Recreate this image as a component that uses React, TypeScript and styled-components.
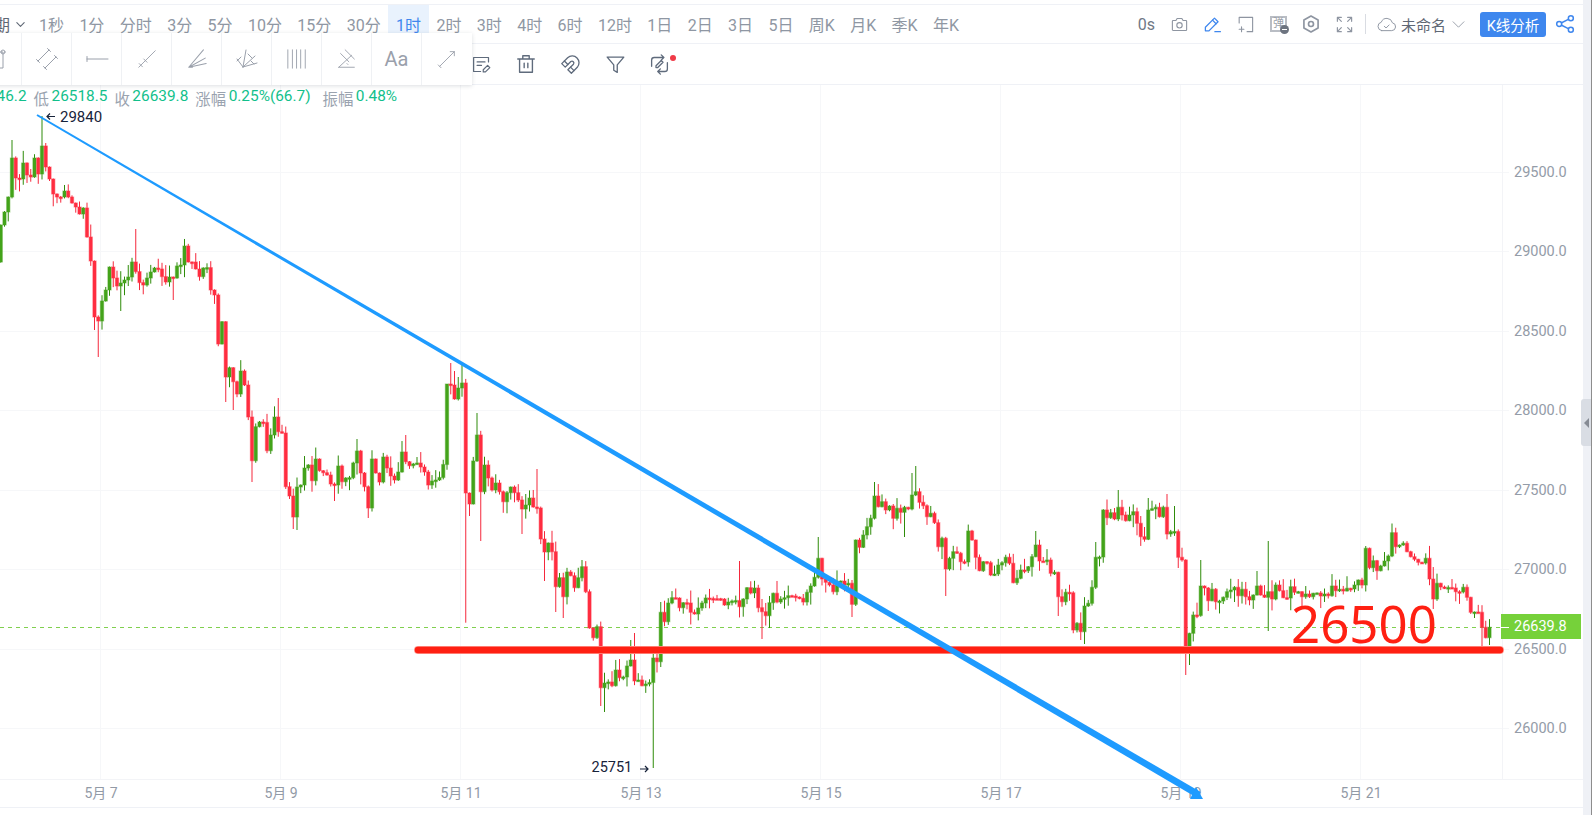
import React from 'react';
import styled, { createGlobalStyle } from 'styled-components';

const FONT = `Roboto, "Noto Sans CJK SC", sans-serif`;

const Global = createGlobalStyle`
  html, body { margin: 0; padding: 0; background: #fff; overflow: hidden; }
  #root { height: 815px; }
  * { box-sizing: border-box; }
`;

const Page = styled.div`
  display: flex; height: 815px; width: 1592px; font-family: ${FONT};
`;
const Main = styled.main`
  position: relative; flex: 1; min-width: 0; display: flex; flex-direction: column; overflow: hidden;
`;
const TopStrip = styled.div`
  height: 5px; flex: none; border-bottom: 1px solid #eff1f6;
`;
const PeriodBar = styled.div`
  height: 39px; flex: none; display: flex; align-items: stretch; padding-right: 8px;
  border-bottom: 1px solid #eff1f6; font-size: 16px; color: #8f97a3;
`;
const PeriodSelect = styled.div`
  display: flex; align-items: center; gap: 5px; margin-left: -22px; margin-right: 5.3px; color: #5f6875;
`;
const Period = styled.div<{ $active?: boolean }>`
  display: flex; align-items: center; padding: 0 7.7px; white-space: nowrap;
  color: ${p => (p.$active ? '#3f87ee' : '#8f97a3')};
  background: ${p => (p.$active ? '#e9f2fd' : 'transparent')};
`;
const Spacer = styled.div`flex: 1;`;
const Seconds = styled.div`
  display: flex; align-items: center; color: #6f7886; margin-right: 8px;
`;
const Slot = styled.div`
  width: 33px; display: flex; align-items: center; justify-content: center;
`;
const Divider = styled.div`
  width: 1px; height: 20px; align-self: center; background: #d9dce2; margin: 0 10px 0 4px;
`;
const DocName = styled.div`
  display: flex; align-items: center; color: #5f6875; margin-left: 4px; white-space: nowrap; font-size: 15px;
`;
const Analyse = styled.div`
  align-self: center; width: 66px; height: 25px; margin: 0 9px 0 15px; border-radius: 3px;
  background: #3e87ee; color: #fff; display: flex; align-items: center; justify-content: center;
  white-space: nowrap; font-size: 14.5px;
`;
const ToolBar = styled.div`
  height: 41px; flex: none; display: flex; align-items: center; padding-left: 459.5px;
  border-bottom: 1px solid #eff1f6;
`;
const ToolSlot = styled.div`
  position: relative; width: 44.5px; height: 40px; display: flex; align-items: center; justify-content: center;
`;
const RedDot = styled.span`
  position: absolute; left: 32px; top: 11px; width: 6px; height: 6px; border-radius: 50%; background: #f03a47;
`;
const DrawPanel = styled.div`
  position: absolute; left: -28px; top: 33px; height: 52px; display: flex; background: #fff;
  box-shadow: 0 1px 4px rgba(60, 70, 90, 0.18); z-index: 3;
`;
const DrawItem = styled.div`
  width: 50px; display: flex; align-items: center; justify-content: center;
  border-right: 1px solid #eff1f4; color: #9aa0ab; font-size: 20px;
  &:last-child { border-right: 0; }
`;
const InfoRow = styled.div`
  position: absolute; left: -47.3px; top: 88px; height: 20px; display: flex; align-items: center; gap: 7px;
  font-size: 15.4px; white-space: nowrap; z-index: 2;
`;
const InfoItem = styled.span<{ $far?: boolean }>`
  display: inline-flex; gap: 2.5px; margin-left: ${p => (p.$far ? 5 : 0)}px;
`;
const InfoLabel = styled.span`color: #9aa3af;`;
const InfoValue = styled.span`color: #12bf8b;`;
const ChartWrap = styled.div`
  height: 723px; flex: none; border-bottom: 1px solid #eff1f6;
`;
const ChartSvg = styled.svg`
  display: block; width: 1583px; height: 723px;
`;
const PriceTag = styled.div`
  position: absolute; left: 1501px; top: 614px; width: 80px; height: 25px; background: #76d13a; color: #fff;
  font-size: 14.5px; display: flex; align-items: center; padding-left: 13px; z-index: 2;
  &::before { content: ''; position: absolute; left: 0; top: 12.5px; width: 8px; height: 1px; background: #fff; }
`;
const Gutter = styled.aside`
  position: relative; width: 9px; flex: none; background: #eff1f6; border-right: 1px solid #8d8d8d; z-index: 4;
`;
const Handle = styled.div`
  position: absolute; left: -2px; top: 399px; width: 10px; height: 47px; background: #d9dde4;
  border-radius: 3px 0 0 3px; display: flex; align-items: center; justify-content: center;
  &::after {
    content: ''; border-style: solid; border-width: 5px 5px 5px 0;
    border-color: transparent #868b94 transparent transparent;
  }
`;
const Ico = styled.svg.attrs({ viewBox: '0 0 24 24', fill: 'none' })<{ $size: number; $tone: string; $w?: number; $ml?: number }>`
  display: block; flex: none; align-self: center; margin-left: ${p => p.$ml ?? 0}px;
  width: ${p => p.$size}px; height: ${p => p.$size}px;
  stroke: ${p => p.$tone}; stroke-width: ${p => p.$w ?? 1.5}; stroke-linecap: round; stroke-linejoin: round;
`;
const BulletBox = styled.div`
  position: relative; width: 17px; height: 16px; border: 2px solid #b9bdc4; color: #9a9fa8; font-size: 11px;
  line-height: 12px; text-align: center;
`;
const BulletMinus = styled.span`
  position: absolute; right: -4px; bottom: -4px; width: 9px; height: 9px; border-radius: 50%; background: #6d7480;
  &::after { content: ''; position: absolute; left: 2px; top: 4px; width: 5px; height: 1px; background: #fff; }
`;
const AxisText = styled.text`
  font-family: ${FONT}; font-size: 14.5px; fill: #949ca8;
`;
const DateText = styled.text`
  font-family: ${FONT}; font-size: 14px; fill: #929aa6; text-anchor: middle;
`;
const MarkText = styled.text<{ $size: number }>`
  font-family: ${FONT}; font-size: ${p => p.$size}px; fill: #17233a;
`;
const BigText = styled.text`
  font-family: "Noto Sans", sans-serif; font-size: 51px; fill: #ff2012;
`;

const GRAY = '#8e95a1';
const BLUE = '#3f87ee';
const DARK = '#5f6b7c';
const PANEL = '#9aa0ab';

const closes = [225,212,197,158,178,179,163,175,177,158,174,146,167,179,194,197,197,191,197,203,207,214,208,237,261,317,321,301,290,267,278,286,283,280,277,262,271.6,282.6,285,278,272,268,269,276.6,282,277,278,266,265,246,262,262,269,276.6,268,267.6,290,295,344,321.7,377,367.7,381.7,394,371,385,417,460.7,426.7,422,422.5,450.7,435,417,431.7,433,486.7,496,517,487,485,468,465,480.7,459,470.7,472.7,475,484,485,466,481.7,478,477.7,463,451,473,486.7,508,459,473,482,457,468,476,480,472,452,461.7,465.7,464,463,467,472,485,481,480,477.5,464.5,384,385,399,388,383,493,504,461,435,491.7,465,478,490,483,491.7,501.7,492.7,487,492.7,500,509,505,498,507,508,539,552,543,551.7,586.7,577.7,596.7,572,575.7,587.7,577.7,566.7,591.7,628,637.7,626.7,687.7,683,682,685.7,670,677.7,677,666,660,681,680,685.7,684,682.5,658,661.7,612.3,621.7,603,597.7,598,607.7,602.7,603,612.3,614,608,603,598,598.5,598.7,598.7,599,605,602,601,600.5,606.7,599,587.7,593,588,607.7,611.7,615.7,602.7,593.3,602,599,597.7,595.7,596,597,598.3,602,592.3,586,577.3,558.3,579,582.3,585,591.7,581.7,581,585,583.3,604.3,540,547.3,535,526.7,518.3,496,506.7,501.7,510,506,518.3,508.3,512.3,507.3,509,495,491.7,502.3,505.7,516.7,513.3,522.7,546.7,538.3,569,558.3,551.7,553.3,561.7,562,531,540,557.3,570.7,561.7,562.7,575,574,565,562.7,557.3,563.3,582.7,578.3,570,570.7,566.7,556.7,545,561,561.5,560,573.3,572.3,596.7,601.7,592.3,592.8,630,623.3,631.7,606,603.3,587.3,557.3,557,510,517.7,512.7,519,507.3,515,520.7,515,511.7,523.3,536.7,539.3,510,508.7,507.3,516.7,507.3,534,531.7,531.5,557.3,560,653.3,633.3,615,615.5,586,588,600.7,589.3,601.7,601,597.3,591.7,590,587.3,595.7,589.3,596.7,600,595,586,595,597.3,591.7,599,585,590.7,597.7,598,586.7,592.3,591.7,596.7,594,596.7,593.3,593,596,594,595.7,586,590.7,589.3,591,588.3,589,585,580,585,548.3,567.7,560.7,570.7,566,561,556,532.7,546.7,545,543.3,551.7,556.7,559.3,562.3,563,558.3,579,599,583.3,587,588.3,587.5,588,591.7,591.9,587.3,597.3,612.3,612,612.3,627.3,637.7,627.3];

const highs: Record<number, number> = {
  3: 140, 11: 116, 12: 143, 36: 229, 74: 398, 95: 439, 108: 435, 119: 384, 120: 363, 121: 371, 122: 377, 123: 365, 127: 413,
  143: 469, 168: 640, 169: 633, 176: 602, 197: 561, 218: 537, 233: 482, 244: 466, 243: 473, 276: 531, 292: 542, 298: 490, 306: 498,
  311: 494, 313: 506, 320: 560, 335: 571, 338: 541, 364: 546, 371: 523.5,
};
const lows: Record<number, number> = {
  25: 330, 26: 357, 32: 311, 46: 300, 60: 402, 62: 410, 67: 482, 78: 529, 79: 530, 89: 501, 98: 518, 124: 622.7, 125: 516, 128: 541,
  139: 534, 145: 581, 148: 612, 150: 618, 160: 706, 161: 712, 174: 768, 203: 639, 227: 617, 228: 606, 241: 537, 252: 596, 282: 616,
  288: 640, 289: 644, 314: 568, 316: 675, 317: 665, 322: 611, 338: 631, 382: 609, 395: 648, 397: 645,
};

let seed = 77;
const rnd = () => {
  seed = (seed * 16807) % 2147483647;
  return seed / 2147483647;
};

const candles = closes.map((c, k) => {
  const o = k === 0 ? 262 : closes[k - 1];
  const top = Math.min(o, c);
  const bot = Math.max(o, c);
  const r1 = rnd();
  const r2 = rnd();
  return {
    x: 0.75 + 3.75 * k,
    o, c, top, bot,
    hi: highs[k] ?? top - (r1 * r1 * 12 + 0.5),
    lo: lows[k] ?? bot + (r2 * r2 * 12 + 0.5),
    up: c < o,
  };
});

const yTicks = [
  [728, '26000.0'], [648.5, '26500.0'], [569, '27000.0'], [489.5, '27500.0'],
  [410, '28000.0'], [330.5, '28500.0'], [251, '29000.0'], [171.5, '29500.0'],
] as const;
const xTicks = [
  [100, '5月 7'], [280, '5月 9'], [460, '5月 11'], [640, '5月 13'],
  [820, '5月 15'], [1000, '5月 17'], [1180, '5月 19'], [1360, '5月 21'],
] as const;

const periods = ['1秒','1分','分时','3分','5分','10分','15分','30分','1时','2时','3时','4时','6时','12时','1日','2日','3日','5日','周K','月K','季K','年K'];

const Chart: React.FC = () => {
  const x0 = 37, y0 = 115, x1 = 1199, y1 = 795;
  const len = Math.hypot(x1 - x0, y1 - y0);
  const nx = -(y1 - y0) / len, ny = (x1 - x0) / len;
  const w0 = 1.0, w1 = 3.4;
  const blue = [
    [x0 + nx * w0, y0 + ny * w0], [x1 + nx * w1, y1 + ny * w1],
    [x1 - nx * w1, y1 - ny * w1], [x0 - nx * w0, y0 - ny * w0],
  ].map(p => p.join(',')).join(' ');
  return (
    <ChartSvg viewBox="0 85 1583 723">
      {yTicks.map(([y]) => (
        <line key={y} x1={0} x2={1509} y1={Math.round(y) + 0.5} y2={Math.round(y) + 0.5} stroke="#f6f7f9" />
      ))}
      {xTicks.map(([x]) => (
        <line key={x} x1={x + 0.5} x2={x + 0.5} y1={85} y2={779} stroke="#f6f7f9" />
      ))}
      <line x1={1502.5} x2={1502.5} y1={85} y2={779} stroke="#f3f4f7" />
      <line x1={0} x2={1583} y1={779.5} y2={779.5} stroke="#f3f4f7" />
      {yTicks.map(([y, t]) => (
        <AxisText key={t} x={1514} y={y + 5}>{t}</AxisText>
      ))}
      {xTicks.map(([x, t]) => (
        <DateText key={t} x={x + 1} y={798}>{t}</DateText>
      ))}
      <line x1={0} x2={1502} y1={627.5} y2={627.5} stroke="#80d04e" strokeDasharray="4 4" />
      {candles.map((d, i) => (
        <g key={i}>
          <rect x={d.x - 0.5} y={d.hi} width={1} height={d.lo - d.hi} fill={d.up ? '#2f8c0a' : '#f5283c'} />
          <rect
            x={d.x - 1.6}
            y={d.top}
            width={3.2}
            height={Math.max(d.bot - d.top, 1.6)}
            fill={d.up ? '#43a31a' : '#ff2d40'}
            stroke={d.up ? '#43a31a' : '#ff2d40'}
            strokeOpacity={0.4}
            strokeWidth={1.2}
          />
        </g>
      ))}
      <line x1={418} x2={1500} y1={650} y2={650} stroke="#ff9a92" strokeWidth={8} strokeLinecap="round" />
      <line x1={418} x2={1500} y1={650} y2={650} stroke="#ff2012" strokeWidth={6.4} strokeLinecap="round" />
      <BigText x={1291} y={643}>26500</BigText>
      <polygon points={blue} fill="#1e9bff" />
      <polygon points="1190,799 1203,799 1196,787" fill="#1e9bff" />
      <path d="M55 116.5H47M50 113.5l-3 3 3 3" stroke="#17233a" strokeWidth={1.2} fill="none" />
      <MarkText $size={15} x={60} y={121.5}>29840</MarkText>
      <MarkText $size={14.5} x={591.5} y={772}>25751</MarkText>
      <path d="M640 769h8M645 766l3 3-3 3" stroke="#17233a" strokeWidth={1.2} fill="none" />
    </ChartSvg>
  );
};

const App: React.FC = () => (
  <Page>
    <Global />
    <Main>
      <TopStrip />
      <PeriodBar>
        <PeriodSelect>
          周期
          <Ico $size={11} $tone="#5f6875" $w={2.4}><path d="M4 8l8 8 8-8" /></Ico>
        </PeriodSelect>
        {periods.map(p => (
          <Period key={p} $active={p === '1时'}>{p}</Period>
        ))}
        <Spacer />
        <Seconds>0s</Seconds>
        <Slot>
          <Ico $size={19} $tone={GRAY} $w={1.4}>
            <path d="M4 7h3.5L9 4.5h6L16.5 7H20a1 1 0 0 1 1 1v10.5a1 1 0 0 1-1 1H4a1 1 0 0 1-1-1V8a1 1 0 0 1 1-1z" />
            <circle cx="12" cy="13" r="3.4" />
          </Ico>
        </Slot>
        <Slot>
          <Ico $size={19} $tone={BLUE} $w={1.6}>
            <path d="M3 20v-4.5L14.5 4l4.5 4.5L7.5 20H3z" />
            <path d="M12 6.5l4.5 4.5" />
            <path d="M15 21h7" />
          </Ico>
        </Slot>
        <Slot>
          <Ico $size={19} $tone={GRAY} $w={1.4}>
            <path d="M4 10V3h17v18h-7" />
            <path d="M7 15v6M4 18h6" />
          </Ico>
        </Slot>
        <Slot>
          <BulletBox>
            弹
            <BulletMinus />
          </BulletBox>
        </Slot>
        <Slot>
          <Ico $size={20} $tone={GRAY} $w={2}>
            <path d="M12 2.5l8.5 4.8v9.4L12 21.5l-8.5-4.8V7.3z" />
            <circle cx="12" cy="12" r="3" />
          </Ico>
        </Slot>
        <Slot>
          <Ico $size={19} $tone={GRAY} $w={1.5}>
            <path d="M3 8V3h5M3 3l5 5M21 8V3h-5M21 3l-5 5M3 16v5h5M3 21l5-5M21 16v5h-5M21 21l-5-5" />
          </Ico>
        </Slot>
        <Divider />
        <Ico $size={21} $tone={GRAY} $w={1.1}>
          <path d="M6.5 19H18a4.5 4.5 0 0 0 .8-8.9A6.7 6.7 0 0 0 6 9.4 4.9 4.9 0 0 0 6.5 19z" />
          <path d="M9.5 14l2 2 3.5-3.5" />
        </Ico>
        <DocName>未命名</DocName>
        <Ico $size={13} $tone={GRAY} $w={1.6} $ml={6}>
          <path d="M2 7l10 10 10-10" />
        </Ico>
        <Analyse>K线分析</Analyse>
        <Ico $size={20} $tone={BLUE} $w={1.8}>
          <circle cx="19" cy="5" r="3" />
          <circle cx="5" cy="12" r="3" />
          <circle cx="19" cy="19" r="3" />
          <path d="M8 10.5l8-4M8 13.5l8 4" />
        </Ico>
      </PeriodBar>
      <ToolBar>
        <ToolSlot>
          <Ico $size={21} $tone={DARK} $w={1.4}>
            <path d="M20 9V4H3v16h8" />
            <path d="M7 9h9M7 13h5" />
            <path d="M14 20.5v-2.5l5-5 2.5 2.5-5 5z" />
          </Ico>
        </ToolSlot>
        <ToolSlot>
          <Ico $size={22} $tone={DARK} $w={1.5}>
            <path d="M3 6.5h18M8.5 6.5V3h7v3.5M5 6.5V21h14V6.5M10 11v5M14 11v5" />
          </Ico>
        </ToolSlot>
        <ToolSlot>
          <Ico $size={21} $tone={DARK} $w={1.5}>
            <path d="m6 15-4-4 6.75-6.77a7.79 7.79 0 0 1 11 11L13 22l-4-4 6.39-6.36a2.14 2.14 0 0 0-3-3L6 15" />
            <path d="m5 8 4 4M12 15l4 4" />
          </Ico>
        </ToolSlot>
        <ToolSlot>
          <Ico $size={21} $tone={DARK} $w={1.5}>
            <path d="M2.5 3.5h19l-7.5 9V21l-4-2.5v-6z" />
          </Ico>
        </ToolSlot>
        <ToolSlot>
          <Ico $size={21} $tone={DARK} $w={1.5}>
            <path d="M3 14V7a3 3 0 0 1 3-3h11M14 1l3 3-3 3" />
            <path d="M21 10v7a3 3 0 0 1-3 3h-8M13 23l-3-3 3-3" />
            <path d="M8 15.5v-2l6-6 2 2-6 6z" />
          </Ico>
          <RedDot />
        </ToolSlot>
      </ToolBar>
      <ChartWrap>
        <Chart />
      </ChartWrap>
      <DrawPanel>
        <DrawItem>
          <Ico $size={24} $tone={PANEL} $w={1}>
            <rect x="2" y="5" width="16" height="16" />
            <circle cx="18" cy="5" r="2" />
          </Ico>
        </DrawItem>
        <DrawItem>
          <Ico $size={24} $tone={PANEL} $w={1}>
            <path d="M3 14L14 3M10 21L21 10M1.5 12.5l3 3M12.5 1.5l3 3M8.5 19.5l3 3M19.5 8.5l3 3" />
          </Ico>
        </DrawItem>
        <DrawItem>
          <Ico $size={24} $tone={PANEL} $w={1}>
            <path d="M2 12h21M2 9.5v5" />
          </Ico>
        </DrawItem>
        <DrawItem>
          <Ico $size={22} $tone={PANEL} $w={1}>
            <path d="M3 21L21 3M3.5 17l3.5 3.5M8.5 12l3.5 3.5" />
          </Ico>
        </DrawItem>
        <DrawItem>
          <Ico $size={22} $tone={PANEL} $w={1.1}>
            <path d="M3 21L19 2M3 21L21 11M3 21L22 17M3 21h4" />
          </Ico>
        </DrawItem>
        <DrawItem>
          <Ico $size={24} $tone={PANEL} $w={1}>
            <path d="M8 20L11 3M8 20L20 9M8 20L22 16M8 20L2 12M2 14l4-4M13 7l4 4M16 14l3 3" />
          </Ico>
        </DrawItem>
        <DrawItem>
          <Ico $size={22} $tone={PANEL} $w={1}>
            <path d="M2 2v20M7 2v20M11.5 2v20M16 2v20M21 2v20" />
          </Ico>
        </DrawItem>
        <DrawItem>
          <Ico $size={22} $tone={PANEL} $w={1}>
            <path d="M3 21h17M3 21L17 8M5 6l9 9M10 2l10 10M13 18l-1-1" />
          </Ico>
        </DrawItem>
        <DrawItem>Aa</DrawItem>
        <DrawItem>
          <Ico $size={22} $tone={PANEL} $w={1}>
            <path d="M4 20L20 4M15.5 4H20v4.5M2.5 18.5l3 3" />
          </Ico>
        </DrawItem>
      </DrawPanel>
      <InfoRow>
        <InfoItem><InfoLabel>高</InfoLabel><InfoValue>26646.2</InfoValue></InfoItem>
        <InfoItem><InfoLabel>低</InfoLabel><InfoValue>26518.5</InfoValue></InfoItem>
        <InfoItem><InfoLabel>收</InfoLabel><InfoValue>26639.8</InfoValue></InfoItem>
        <InfoItem><InfoLabel>涨幅</InfoLabel><InfoValue>0.25%(66.7)</InfoValue></InfoItem>
        <InfoItem $far><InfoLabel>振幅</InfoLabel><InfoValue>0.48%</InfoValue></InfoItem>
      </InfoRow>
      <PriceTag>26639.8</PriceTag>
    </Main>
    <Gutter>
      <Handle />
    </Gutter>
  </Page>
);

export default App;
